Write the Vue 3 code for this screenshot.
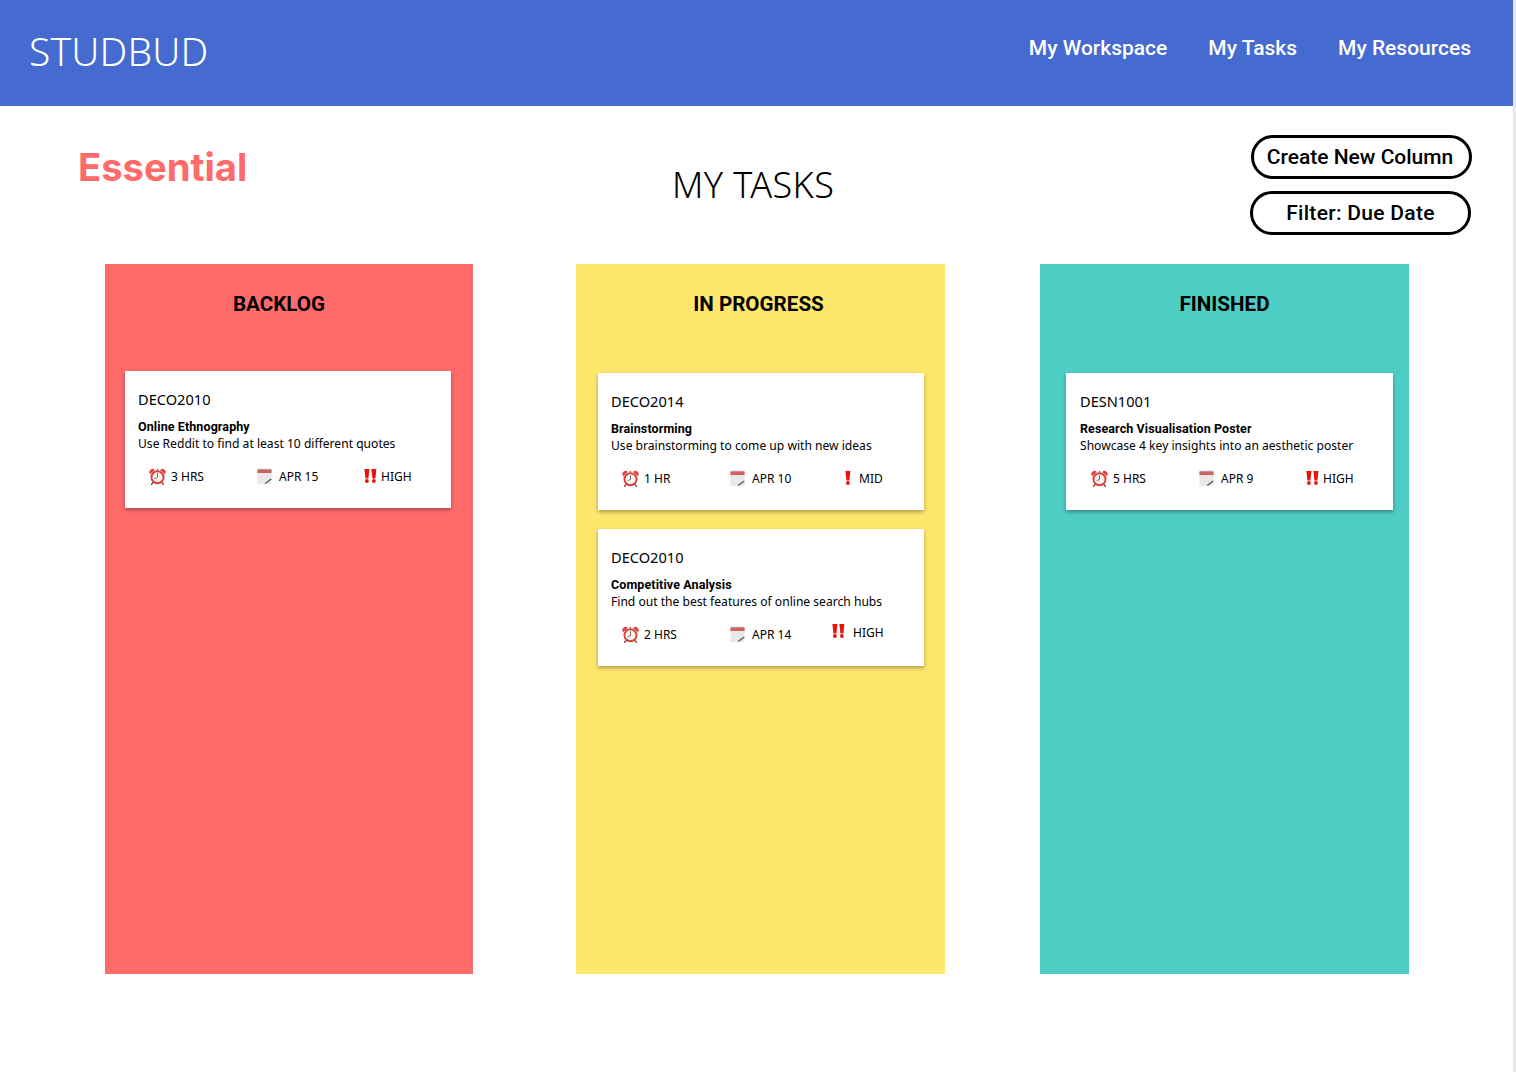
<template>
  <div class="page">
    <header class="topbar">
      <div class="logo">STUDBUD</div>
      <nav class="nav">
        <a v-for="link in links" :key="link" class="nav-link">{{ link }}</a>
      </nav>
    </header>

    <section class="intro">
      <div class="essential">Essential</div>
      <h1 class="page-title">MY TASKS</h1>
      <div class="actions">
        <button class="pill pill-create">Create New Column</button>
        <button class="pill pill-filter">Filter: Due Date</button>
      </div>
    </section>

    <section class="board">
      <div v-for="col in columns" :key="col.title" class="column" :class="col.cls">
        <h2 class="column-title">{{ col.title }}</h2>
        <div class="cards">
          <article v-for="task in col.tasks" :key="task.name" class="card">
            <div class="code">{{ task.code }}</div>
            <div class="name">{{ task.name }}</div>
            <div class="desc">{{ task.desc }}</div>
            <div class="meta">
              <div class="cell">
                <svg class="icon" viewBox="0 0 18 18">
                  <path d="M1.2 6.6a3.4 3.4 0 0 1 5-4.6zM16.8 6.6a3.4 3.4 0 0 0-5-4.6z" fill="#d9473f" />
                  <path d="M9 .8v2" stroke="#9b5a54" stroke-width="1.2" />
                  <path d="M4.4 15.2l-1.6 2M13.6 15.2l1.6 2" stroke="#8a3f3a" stroke-width="1.5" stroke-linecap="round" />
                  <circle cx="9" cy="9.8" r="6.4" fill="#f8f1ef" stroke="#d6423a" stroke-width="2" />
                  <path d="M9 6v3.8l-2.6 1.5" fill="none" stroke="#555" stroke-width=".9" stroke-linecap="round" />
                </svg>
                <span class="label">{{ task.time }}</span>
              </div>
              <div class="cell cell-date">
                <svg class="icon" viewBox="0 0 18 18">
                  <path d="M1.5 1.5h15v15.5h-15z" fill="#ebe9e7" />
                  <path d="M1.5 1.5h15v3.8h-15z" fill="#d0605c" />
                  <path d="M3 .6v2M5 .6v2M7 .6v2M9 .6v2M11 .6v2M13 .6v2M15 .6v2" stroke="#8d8d8d" stroke-width=".7" />
                  <path d="M9.5 15.6l6.2-4.6 1 1.2-5.8 4.2-1.8.4z" fill="#5f5f5f" />
                </svg>
                <span class="label">{{ task.date }}</span>
              </div>
              <div class="cell cell-priority" :class="task.prioClass">
                <svg class="marks" :class="{ single: task.level === 1 }" :viewBox="task.level === 1 ? '0 0 6 14' : '0 0 13 14'">
                  <g v-for="n in task.level" :key="n" :transform="`translate(${(n - 1) * 7} 0)`">
                    <path d="M.4 0h5l-1 9.4h-3z" fill="#e8130c" />
                    <circle cx="2.9" cy="12" r="1.9" fill="#e8130c" />
                  </g>
                </svg>
                <span class="label">{{ task.priority }}</span>
              </div>
            </div>
          </article>
        </div>
      </div>
    </section>
  </div>
</template>

<script setup>
const links = ['My Workspace', 'My Tasks', 'My Resources']

const columns = [
  {
    title: 'BACKLOG',
    cls: 'backlog',
    tasks: [
      {
        code: 'DECO2010',
        name: 'Online Ethnography',
        desc: 'Use Reddit to find at least 10 different quotes',
        time: '3 HRS',
        date: 'APR 15',
        priority: 'HIGH',
        level: 2,
        prioClass: '',
      },
    ],
  },
  {
    title: 'IN PROGRESS',
    cls: 'progress',
    tasks: [
      {
        code: 'DECO2014',
        name: 'Brainstorming',
        desc: 'Use brainstorming to come up with new ideas',
        time: '1 HR',
        date: 'APR 10',
        priority: 'MID',
        level: 1,
        prioClass: 'prio-mid',
      },
      {
        code: 'DECO2010',
        name: 'Competitive Analysis',
        desc: 'Find out the best features of online search hubs',
        time: '2 HRS',
        date: 'APR 14',
        priority: 'HIGH',
        level: 2,
        prioClass: 'prio-raised',
      },
    ],
  },
  {
    title: 'FINISHED',
    cls: 'finished',
    tasks: [
      {
        code: 'DESN1001',
        name: 'Research Visualisation Poster',
        desc: 'Showcase 4 key insights into an aesthetic poster',
        time: '5 HRS',
        date: 'APR 9',
        priority: 'HIGH',
        level: 2,
        prioClass: '',
      },
    ],
  },
]
</script>

<style>
html,
body {
  background: #fff;
}
</style>

<style scoped>
.page {
  width: 1513px;
  height: 1072px;
  background: #fff;
  border-right: 3px solid #e9e9e9;
  font-family: 'Noto Sans', sans-serif;
  color: #000;
  overflow: hidden;
}

.topbar {
  height: 106px;
  background: #456ad0;
  display: flex;
  justify-content: space-between;
  color: #fff;
  padding: 0 42px 0 29px;
}

.logo {
  font-family: 'Noto Sans', sans-serif;
  font-weight: 300;
  font-size: 39px;
  letter-spacing: 0.15px;
  line-height: 102px;
}

.nav {
  display: flex;
  gap: 41px;
  padding-top: 34px;
}

.nav-link {
  font-family: Roboto, sans-serif;
  font-weight: 500;
  font-size: 21px;
  line-height: 28px;
}

.intro {
  height: 158px;
  display: grid;
  grid-template-columns: 594px 1fr auto;
  padding: 0 41px 0 78px;
}

.essential {
  font-family: Inter, sans-serif;
  font-weight: 700;
  font-size: 38.2px;
  line-height: 46px;
  color: #ff6b6b;
  padding-top: 38px;
}

.page-title {
  margin: 0;
  font-family: 'Noto Sans', sans-serif;
  font-weight: 300;
  font-size: 36px;
  letter-spacing: 0.4px;
  line-height: 48px;
  padding-top: 55px;
}

.actions {
  display: flex;
  flex-direction: column;
  gap: 12px;
  padding-top: 29px;
}

.pill {
  width: 221px;
  height: 44px;
  border: 3px solid #000;
  border-radius: 22px;
  background: #fff;
  font-family: Roboto, sans-serif;
  font-weight: 500;
  font-size: 21px;
  color: #000;
  padding: 0;
}

.pill-create {
  padding-right: 3px;
}

.pill-filter {
  margin-left: -1px;
  letter-spacing: 0.3px;
}

.board {
  display: flex;
  padding-left: 105px;
}

.column {
  width: 368px;
  height: 710px;
}

.backlog {
  background: #ff6b6b;
}

.progress {
  background: #ffe66d;
  width: 369px;
  margin-left: 103px;
}

.finished {
  background: #4ecdc4;
  width: 369px;
  margin-left: 95px;
}

.column-title {
  margin: 0;
  font-family: Roboto, sans-serif;
  font-weight: 700;
  font-size: 20.6px;
  line-height: 28px;
  padding-top: 26px;
  text-align: center;
}

.backlog .column-title {
  padding-right: 20px;
}

.progress .column-title {
  padding-right: 4px;
}

.cards {
  display: flex;
  flex-direction: column;
  gap: 19px;
  padding: 55px 0 0 22px;
}

.backlog .cards {
  padding: 53px 0 0 20px;
}

.finished .cards {
  padding-left: 26px;
}

.card {
  width: 326px;
  height: 137px;
  box-sizing: border-box;
  background: #fff;
  box-shadow: 0 2px 4px rgba(0, 0, 0, 0.32);
  padding: 18px 0 0 13px;
}

.finished .card {
  width: 327px;
  padding-left: 14px;
}

.code {
  font-size: 14.6px;
  line-height: 20px;
}

.name {
  font-family: Roboto, sans-serif;
  font-weight: 700;
  font-size: 12.5px;
  letter-spacing: 0.1px;
  line-height: 16px;
  margin-top: 10px;
}

.desc {
  font-size: 12.1px;
  line-height: 17px;
}

.meta {
  display: flex;
  align-items: center;
  margin-top: 15px;
  padding-left: 11px;
}

.cell {
  display: flex;
  align-items: center;
  flex: none;
  width: 107px;
  height: 18px;
}

.cell-date {
  width: 108px;
}

.icon {
  width: 17px;
  height: 17px;
  flex: none;
  margin-right: 5px;
}

.cell-date .icon {
  margin-right: 6px;
}

.label {
  font-size: 12px;
  line-height: 17px;
  white-space: nowrap;
}

.marks {
  width: 13px;
  height: 14px;
  flex: none;
  margin-right: 4px;
}

.marks.single {
  width: 6px;
  margin: 0 8px 0 8px;
}

.prio-raised {
  margin: -3px 0 0 -5px;
}

.prio-raised .marks {
  margin-right: 8px;
  margin-top: -3px;
}
</style>
